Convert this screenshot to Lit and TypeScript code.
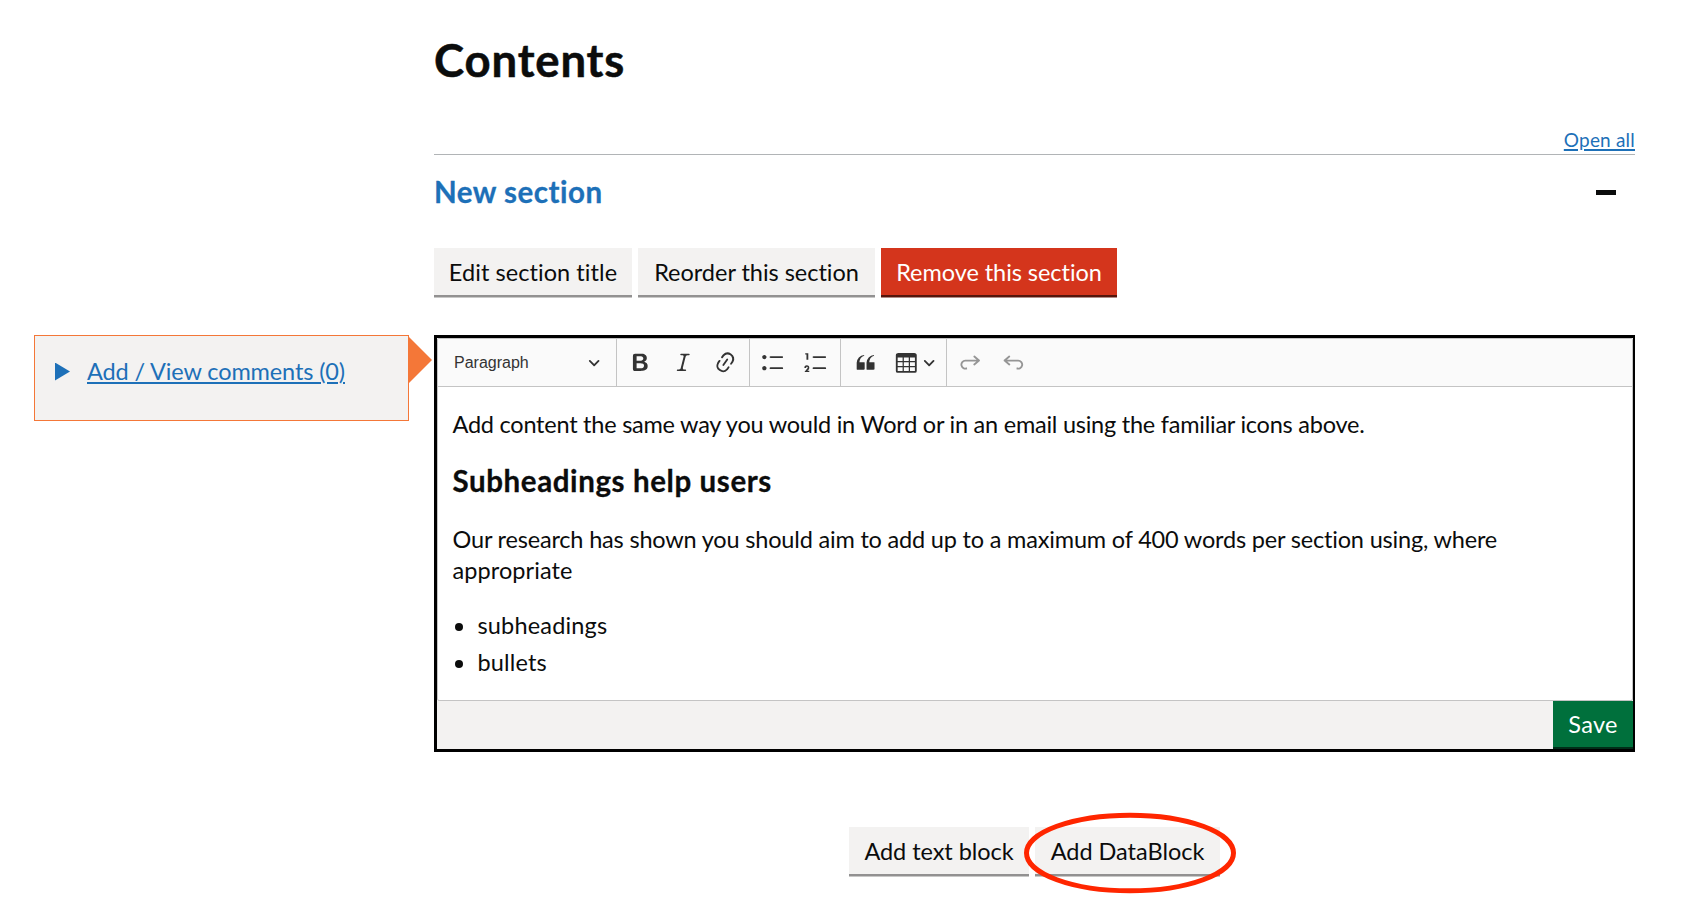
import { LitElement, html, css, svg } from "lit";
import { customElement, property } from "lit/decorators.js";

const ICONS = {
  bold: "M10.187 17H5.773c-.637 0-1.092-.138-1.364-.415-.273-.277-.409-.718-.409-1.323V4.738c0-.617.14-1.062.419-1.332.279-.27.73-.406 1.354-.406h4.68c.69 0 1.288.041 1.793.124.506.083.96.242 1.36.478.341.197.644.447.906.75a3.262 3.262 0 0 1 .808 2.162c0 1.401-.722 2.426-2.167 3.075C15.05 10.175 16 11.315 16 13.01a3.756 3.756 0 0 1-2.296 3.504 6.1 6.1 0 0 1-1.517.377c-.571.073-1.238.11-2 .11zm-.217-6.217H7v4.087h3.069c1.977 0 2.965-.69 2.965-2.072 0-.707-.256-1.22-.768-1.537-.512-.319-1.277-.478-2.296-.478zM7 5.13v3.619h2.606c.729 0 1.292-.067 1.69-.2a1.6 1.6 0 0 0 .91-.765c.165-.267.247-.566.247-.897 0-.707-.26-1.176-.778-1.409-.519-.232-1.31-.348-2.375-.348H7z",
  italic: "m9.586 14.633.021.004c-.036.335.095.655.393.962.082.083.173.15.274.201h1.474a.6.6 0 1 1 0 1.2H5.304a.6.6 0 0 1 0-1.2h1.15c.474-.07.809-.182 1.005-.334.157-.122.291-.32.404-.597l2.416-9.55a1.053 1.053 0 0 0-.281-.823 1.12 1.12 0 0 0-.442-.296H8.15a.6.6 0 0 1 0-1.2h6.443a.6.6 0 1 1 0 1.2h-1.195c-.376.056-.65.155-.823.296-.215.175-.423.439-.623.79l-2.366 9.347z",
  link: "m11.077 15 .991-1.416a.75.75 0 1 1 1.229.86l-1.148 1.64a.748.748 0 0 1-.217.206 5.251 5.251 0 0 1-8.503-5.955.741.741 0 0 1 .12-.274l1.147-1.639a.75.75 0 1 1 1.228.86L4.933 10.7l.006.003a3.75 3.75 0 0 0 6.132 4.294l.006.004zm5.494-5.335a.748.748 0 0 1-.12.274l-1.147 1.639a.75.75 0 1 1-1.228-.86l.86-1.23a3.75 3.75 0 0 0-6.144-4.301l-.86 1.229a.75.75 0 0 1-1.229-.86l1.148-1.64a.748.748 0 0 1 .217-.206 5.251 5.251 0 0 1 8.503 5.955zm-4.563-2.532a.75.75 0 0 1 .184 1.045l-3.155 4.505a.75.75 0 1 1-1.229-.86l3.155-4.506a.75.75 0 0 1 1.045-.184z",
  bullets: "M7 5.75c0 .414.336.75.75.75h9.5a.75.75 0 1 0 0-1.5h-9.5a.75.75 0 0 0-.75.75zm-6 0C1 4.784 1.777 4 2.75 4c.966 0 1.75.777 1.75 1.75 0 .966-.777 1.75-1.75 1.75C1.784 7.5 1 6.723 1 5.75zm6 9c0 .414.336.75.75.75h9.5a.75.75 0 1 0 0-1.5h-9.5a.75.75 0 0 0-.75.75zm-6 0c0-.966.777-1.75 1.75-1.75.966 0 1.75.777 1.75 1.75 0 .966-.777 1.75-1.75 1.75-.966 0-1.75-.777-1.75-1.75z",
  numbers: "M7 5.75c0 .414.336.75.75.75h9.5a.75.75 0 1 0 0-1.5h-9.5a.75.75 0 0 0-.75.75zM3.5 3v5H2V3.7H1v-1h2.5V3zM.343 17.857l2.59-3.257H2.92a.6.6 0 1 0-1.04 0H.302a2 2 0 1 1 3.995 0h-.001c-.048.405-.16.734-.333.988-.175.254-.59.692-1.244 1.312H4.3v1h-4l.043-.043zM7 14.75a.75.75 0 0 1 .75-.75h9.5a.75.75 0 1 1 0 1.5h-9.5a.75.75 0 0 1-.75-.75z",
  quote: "M3 10.423a6.5 6.5 0 0 1 6.056-6.408l.038.67C6.448 5.423 5.354 7.663 5.22 10H9c.552 0 .5.432.5.986v4.511c0 .554-.448.503-1 .503h-5c-.552 0-.5-.449-.5-1.003v-4.574zm8 0a6.5 6.5 0 0 1 6.056-6.408l.038.67c-2.646.739-3.74 2.979-3.873 5.315H17c.552 0 .5.432.5.986v4.511c0 .554-.448.503-1 .503h-5c-.552 0-.5-.449-.5-1.003v-4.574z",
  table: "M3 6v3h4V6H3zm0 4v3h4v-3H3zm0 4v3h4v-3H3zm5 3h4v-3H8v3zm5 0h4v-3h-4v3zm4-4v-3h-4v3h4zm0-4V6h-4v3h4zm1.5 8a1.5 1.5 0 0 1-1.5 1.5H3A1.5 1.5 0 0 1 1.5 17V4c.222-.863 1.068-1.5 2-1.5h13c.932 0 1.778.637 2 1.5v13zM12 13v-3H8v3h4zm0-4V6H8v3h4z",
  redo: "m14.958 9.367-2.189 1.837a.75.75 0 0 0 .965 1.149l3.788-3.18a.747.747 0 0 0 .21-.284.75.75 0 0 0-.17-.945L13.77 4.762a.75.75 0 1 0-.964 1.15l2.331 1.955H6.22A.75.75 0 0 0 6 7.9a4 4 0 1 0 1.477 7.718l-.344-1.489A2.5 2.5 0 1 1 6.039 9.4l-.008-.032h8.927z",
  undo: "m5.042 9.367 2.189 1.837a.75.75 0 0 1-.965 1.149l-3.788-3.18a.747.747 0 0 1-.21-.284.75.75 0 0 1 .17-.945L6.23 4.762a.75.75 0 1 1 .964 1.15L4.863 7.866h8.917A.75.75 0 0 1 14 7.9a4 4 0 1 1-1.477 7.718l.344-1.489a2.5 2.5 0 1 0 1.094-4.73l.008-.032H5.042z",
};

const chevron = html`<svg class="chevron" viewBox="0 0 10 10">${svg`<path d="M.941 4.523a.75.75 0 1 1 1.06-1.06l3.006 3.005 3.005-3.005a.75.75 0 1 1 1.06 1.06l-3.549 3.55a.75.75 0 0 1-1.168-.136L.941 4.523z"/>`}</svg>`;

const icon = (name: keyof typeof ICONS) =>
  html`<svg class="icon" viewBox="0 0 20 20">${svg`<path d=${ICONS[name]}/>`}</svg>`;

@customElement("gds-button")
class GdsButton extends LitElement {
  @property({ reflect: true }) variant = "secondary";

  static styles = css`
    :host { display: block; }
    button {
      display: block;
      width: 100%;
      height: 47px;
      margin: 0;
      padding: 0;
      border: 0;
      background: #f3f2f1;
      color: #0b0c0c;
      font: inherit;
      font-variant-ligatures: none;
      line-height: 49px;
      letter-spacing: inherit;
      white-space: nowrap;
      text-align: center;
      box-shadow: 0 2px 0 #929191, 0 3px 0 #c8c8c7;
    }
    :host([variant="warning"]) button {
      background: #d4351c;
      color: #fff;
      box-shadow: 0 2px 0 #55150b, 0 3px 0 #b08b86;
    }
    :host([variant="primary"]) button {
      height: 46px;
      line-height: 47px;
      background: #00703c;
      color: #fff;
      box-shadow: 0 2px 0 #002d18;
    }
  `;

  render() {
    return html`<button type="button"><slot></slot></button>`;
  }
}

@customElement("editor-toolbar")
class EditorToolbar extends LitElement {
  static styles = css`
    :host {
      display: flex;
      height: 47px;
      background: #fafafa;
      border-bottom: 1px solid #c4c4c4;
    }
    .group {
      display: flex;
      align-items: center;
      box-sizing: border-box;
      border-right: 1px solid #c4c4c4;
      padding-left: 2.2px;
    }
    .group.last { border-right: 0; }
    .style { width: 179px; padding: 0 16px 0 16px; justify-content: space-between; }
    .label {
      font: 16px/20px "Liberation Sans", Arial, sans-serif;
      color: #333;
    }
    .marks { width: 133px; }
    .lists { width: 91px; }
    .blocks { width: 106px; padding-left: 4px; }
    .tool { display: flex; justify-content: center; align-items: center; width: 42.6px; height: 42px; color: #333; }
    .tool.drop { width: 56px; justify-content: flex-start; gap: 5px; padding-left: 9px; }
    .disabled { opacity: 0.5; }
    svg { display: block; flex: none; fill: currentColor; }
    .icon { width: 24.6px; height: 24.6px; }
    .chevron { width: 12.3px; height: 12.3px; color: #333; }
  `;

  render() {
    return html`
      <div class="group style"><span class="label">Paragraph</span>${chevron}</div>
      <div class="group marks">
        <span class="tool">${icon("bold")}</span>
        <span class="tool">${icon("italic")}</span>
        <span class="tool">${icon("link")}</span>
      </div>
      <div class="group lists">
        <span class="tool">${icon("bullets")}</span>
        <span class="tool">${icon("numbers")}</span>
      </div>
      <div class="group blocks">
        <span class="tool">${icon("quote")}</span>
        <span class="tool drop">${icon("table")}${chevron}</span>
      </div>
      <div class="group last">
        <span class="tool disabled">${icon("redo")}</span>
        <span class="tool disabled">${icon("undo")}</span>
      </div>
    `;
  }
}

@customElement("app-root")
class AppRoot extends LitElement {
  static styles = css`
    :host {
      display: block;
      box-sizing: border-box;
      width: 1695px;
      height: 910px;
      overflow: hidden;
      background: #fff;
      color: #0b0c0c;
      padding: 35px 60px 0 34px;
      font: 23.5px/31px Lato, "Noto Sans", sans-serif;
      font-variant-ligatures: none;
    }
    h1, h2, h3, p, ul { margin: 0; padding: 0; }
    a { color: #1d70b8; text-decoration: underline; text-decoration-thickness: 2px; text-underline-offset: 2px; }
    .head, .section { margin-left: 400px; }
    h1 { font-size: 45.5px; line-height: 50px; letter-spacing: 0.85px; -webkit-text-stroke: 0.5px currentColor; }
    .controls {
      display: flex;
      justify-content: flex-end;
      align-items: flex-end;
      box-sizing: border-box;
      height: 70px;
      padding-bottom: 4px;
      border-bottom: 1px solid #b1b4b6;
    }
    .controls a { font-size: 19px; line-height: 20px; letter-spacing: 0.2px; }
    .title { display: flex; justify-content: space-between; align-items: center; height: 36px; margin-top: 18px; padding-right: 19px; }
    h2 { font-size: 29.5px; line-height: 36px; letter-spacing: 0.5px; padding-top: 2px; color: #1d70b8; -webkit-text-stroke: 0.3px currentColor; }
    .minus { width: 20px; height: 5px; background: #0b0c0c; margin-top: 3px; }
    .actions { display: flex; gap: 6px; margin-top: 39px; }
    .edit { width: 198px; letter-spacing: 0.07px; }
    .reorder { width: 237px; letter-spacing: -0.02px; }
    .remove { width: 236px; letter-spacing: -0.05px; }
    .row { display: flex; align-items: flex-start; margin-top: 40px; }
    .comments {
      display: flex;
      align-items: center;
      gap: 17px;
      box-sizing: border-box;
      width: 375px;
      height: 86px;
      padding: 0 0 13px 20px;
      border: 1px solid #f47738;
      background: #f3f2f1;
      letter-spacing: -0.12px;
      white-space: nowrap;
    }
    .marker { width: 15px; height: 18px; background: #1d70b8; clip-path: polygon(0 0, 100% 50%, 0 100%); }
    .pointer { width: 23px; height: 46px; margin: 2px 2px 0 0; background: #f47738; clip-path: polygon(0 0, 100% 50%, 0 100%); }
    .editor {
      box-sizing: border-box;
      width: 1201px;
      height: 417px;
      border: solid #000;
      border-width: 3px 2px 3px 3px;
      background: #f3f2f1;
    }
    .frame { box-sizing: border-box; height: 363px; border: 1px solid #c4c4c4; border-radius: 2px; background: #fff; overflow: hidden; }
    .body { padding: 22px 15px 0 14.5px; }
    .intro { letter-spacing: -0.235px; white-space: nowrap; }
    h3 { font-size: 29.5px; line-height: 36px; letter-spacing: 0.6px; margin-top: 23px; -webkit-text-stroke: 0.3px currentColor; }
    .advice { margin-top: 25px; letter-spacing: -0.18px; }
    .advice span { letter-spacing: 0.08px; }
    ul { list-style: none; margin-top: 24px; display: grid; gap: 6px; }
    li { display: flex; align-items: center; gap: 15px; letter-spacing: 0.17px; }
    li::before { content: ""; width: 8px; height: 8px; margin: 2px 0 0 2px; border-radius: 50%; background: #0b0c0c; }
    .footer { display: flex; justify-content: flex-end; }
    .save { width: 80px; letter-spacing: 0.3px; }
    .add { display: flex; gap: 6px; margin: 75px 0 0 815px; }
    .text-block { width: 180px; letter-spacing: -0.05px; text-indent: 1.5px; }
    .data-block { position: relative; width: 185px; letter-spacing: -0.02px; }
    .ring { position: absolute; left: -11px; top: -14px; width: 212px; height: 80px; overflow: visible; fill: none; stroke: #ff2600; stroke-width: 5; }
  `;

  render() {
    return html`
      <div class="head">
        <h1>Contents</h1>
        <div class="controls"><a>Open all</a></div>
      </div>
      <div class="section">
        <div class="title"><h2>New section</h2><span class="minus"></span></div>
        <div class="actions">
          <gds-button class="edit">Edit section title</gds-button>
          <gds-button class="reorder">Reorder this section</gds-button>
          <gds-button class="remove" variant="warning">Remove this section</gds-button>
        </div>
      </div>
      <div class="row">
        <div class="comments"><span class="marker"></span><a>Add / View comments (0)</a></div>
        <span class="pointer"></span>
        <div class="editor">
          <div class="frame">
            <editor-toolbar></editor-toolbar>
            <div class="body">
              <p class="intro">Add content the same way you would in Word or in an email using the familiar icons above.</p>
              <h3>Subheadings help users</h3>
              <p class="advice">Our research has shown you should aim to add up to a maximum of 400 words per section using, where <span>appropriate</span></p>
              <ul>
                <li>subheadings</li>
                <li>bullets</li>
              </ul>
            </div>
          </div>
          <div class="footer"><gds-button class="save" variant="primary">Save</gds-button></div>
        </div>
      </div>
      <div class="add">
        <gds-button class="text-block">Add text block</gds-button>
        <div class="data-block">
          <gds-button>Add DataBlock</gds-button>
          <svg class="ring" viewBox="0 0 212 80"><ellipse cx="106" cy="40" rx="103.5" ry="37.8"/></svg>
        </div>
      </div>
    `;
  }
}
